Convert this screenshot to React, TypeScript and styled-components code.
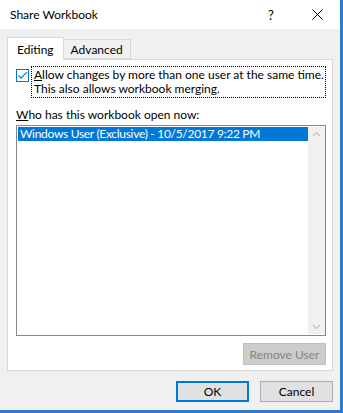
import React from 'react';
import styled, { createGlobalStyle } from 'styled-components';

const GlobalStyle = createGlobalStyle`
  html, body {
    margin: 0;
    padding: 0;
    background: #f0f0f0;
  }
  * {
    box-sizing: border-box;
  }
`;

const Window = styled.div`
  width: 343px;
  height: 413px;
  display: flex;
  flex-direction: column;
  background: #f0f0f0;
  border-right: 3px solid #2b7ccf;
  border-bottom: 3px solid #2b7ccf;
  font-family: 'Segoe UI', Lato, 'Noto Sans', sans-serif;
  font-size: 12px;
  color: #000;
`;

const TitleBar = styled.div`
  height: 29px;
  flex: none;
  display: flex;
  align-items: center;
  background: #ffffff;
  padding-left: 10px;
`;

const Title = styled.span`
  flex: 1;
  font-size: 12px;
`;

const HelpButton = styled.span`
  width: 30px;
  text-align: center;
  font-size: 13px;
  margin-right: 8px;
`;

const CloseButton = styled.span`
  width: 46px;
  height: 29px;
  display: flex;
  align-items: center;
  justify-content: center;
`;

const Body = styled.div`
  flex: 1;
  display: flex;
  flex-direction: column;
  padding: 8px 7px 0 7px;
`;

const TabStrip = styled.div`
  display: flex;
  align-items: flex-end;
  height: 22px;
  position: relative;
  z-index: 1;
`;

const Tab = styled.div<{ $active?: boolean }>`
  height: ${(p) => (p.$active ? '23px' : '20px')};
  padding: 0 ${(p) => (p.$active ? '9px' : '7px')};
  display: flex;
  align-items: center;
  background: ${(p) => (p.$active ? '#ffffff' : '#f0f0f0')};
  border: 1px solid #d9d9d9;
  border-bottom: ${(p) => (p.$active ? 'none' : '1px solid #d9d9d9')};
  border-left: ${(p) => (p.$active ? '1px solid #d9d9d9' : 'none')};
  margin-bottom: ${(p) => (p.$active ? '-1px' : '0')};
`;

const Panel = styled.div`
  height: 312px;
  background: #ffffff;
  border: 1px solid #d9d9d9;
  display: flex;
  flex-direction: column;
  padding: 6px 6px 0 8px;
`;

const CheckRow = styled.div`
  display: flex;
  align-items: flex-start;
`;

const CheckBox = styled.span`
  width: 13px;
  height: 13px;
  margin-top: 3px;
  flex: none;
  border: 1px solid #0078d7;
  background: #ffffff;
  display: flex;
  align-items: center;
  justify-content: center;
`;

const FocusLabel = styled.div`
  margin-left: 2px;
  padding: 1px 2px 1px 2px;
  border: 1px dotted #000;
  line-height: 14px;
  width: 295px;
  white-space: nowrap;
`;

const Key = styled.span`
  text-decoration: underline;
`;

const ListLabel = styled.div`
  margin-top: 9px;
  line-height: 15px;
`;

const ListBox = styled.div`
  margin-top: 3px;
  width: 310px;
  height: 211px;
  border: 1px solid #828790;
  display: flex;
  padding: 1px 0 1px 1px;
`;

const Rows = styled.div`
  flex: 1;
`;

const Row = styled.div<{ $selected?: boolean }>`
  height: 14px;
  line-height: 14px;
  padding-left: 2px;
  letter-spacing: -0.3px;
  white-space: nowrap;
  background: ${(p) => (p.$selected ? '#0078d7' : 'transparent')};
  color: ${(p) => (p.$selected ? '#ffffff' : '#000')};
`;

const ScrollBar = styled.div`
  width: 17px;
  background: #f0f0f0;
  display: flex;
  flex-direction: column;
  justify-content: space-between;
  align-items: center;
  padding: 4px 0;
`;

const ButtonRow = styled.div<{ $gap?: number }>`
  display: flex;
  justify-content: flex-end;
  gap: ${(p) => p.$gap ?? 0}px;
`;

const Button = styled.button<{ $default?: boolean; $disabled?: boolean }>`
  font-family: inherit;
  font-size: 12px;
  width: ${(p) => (p.$disabled ? '83px' : '73px')};
  height: ${(p) => (p.$disabled ? '22px' : '21px')};
  padding: 0;
  background: ${(p) => (p.$disabled ? '#cccccc' : '#e1e1e1')};
  color: ${(p) => (p.$disabled ? '#838383' : '#000')};
  border: ${(p) =>
    p.$default ? '2px solid #0078d7' : p.$disabled ? '1px solid #bfbfbf' : '1px solid #adadad'};
`;

const RemoveRow = styled(ButtonRow)`
  margin-top: 7px;
  width: 310px;
`;

const Footer = styled(ButtonRow)`
  margin-top: 10px;
`;

const Chevron: React.FC<{ up?: boolean }> = ({ up }) => (
  <svg width="9" height="6" viewBox="0 0 9 6">
    <path
      d={up ? 'M1 5 L4.5 1.5 L8 5' : 'M1 1 L4.5 4.5 L8 1'}
      fill="none"
      stroke="#c2c2c2"
      strokeWidth="1.2"
    />
  </svg>
);

const App: React.FC = () => {
  return (
    <>
      <GlobalStyle />
      <Window>
        <TitleBar>
          <Title>Share Workbook</Title>
          <HelpButton>?</HelpButton>
          <CloseButton>
            <svg width="11" height="11" viewBox="0 0 11 11">
              <path d="M0.5 0.5 L10.5 10.5 M10.5 0.5 L0.5 10.5" stroke="#000" strokeWidth="1" />
            </svg>
          </CloseButton>
        </TitleBar>
        <Body>
          <TabStrip>
            <Tab $active>Editing</Tab>
            <Tab>Advanced</Tab>
          </TabStrip>
          <Panel>
            <CheckRow>
              <CheckBox>
                <svg width="11" height="11" viewBox="0 0 11 11">
                  <path d="M1.5 5.5 L4.2 8.2 L9.8 2.2" fill="none" stroke="#0078d7" strokeWidth="1.2" />
                </svg>
              </CheckBox>
              <FocusLabel>
                <Key>A</Key>llow changes by more than one user at the same time.
                <br />
                This also allows workbook merging.
              </FocusLabel>
            </CheckRow>
            <ListLabel>
              <Key>W</Key>ho has this workbook open now:
            </ListLabel>
            <ListBox>
              <Rows>
                <Row $selected>Windows User (Exclusive) - 10/5/2017 9:22 PM</Row>
              </Rows>
              <ScrollBar>
                <Chevron up />
                <Chevron />
              </ScrollBar>
            </ListBox>
            <RemoveRow>
              <Button $disabled>Remove User</Button>
            </RemoveRow>
          </Panel>
          <Footer $gap={11}>
            <Button $default>OK</Button>
            <Button>Cancel</Button>
          </Footer>
        </Body>
      </Window>
    </>
  );
};

export default App;
